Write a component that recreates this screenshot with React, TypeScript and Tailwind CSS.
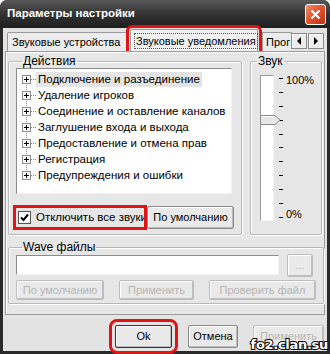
import React from "react";

const actions = [
  "Подключение и разъединение",
  "Удаление игроков",
  "Соединение и оставление каналов",
  "Заглушение входа и выхода",
  "Предоставление и отмена прав",
  "Регистрация",
  "Предупреждения и ошибки",
];

const font = { fontFamily: '"Liberation Sans", Arial, sans-serif' };

function Btn({
  children,
  className = "",
  disabled = false,
}: {
  children: React.ReactNode;
  className?: string;
  disabled?: boolean;
}) {
  return (
    <div
      className={`flex items-center justify-center whitespace-nowrap rounded-[2px] border bg-[#e9e9e9] shadow-[inset_-1px_-1px_0_#bdbdbd,inset_1px_1px_0_#ffffff] text-[11px] ${
        disabled ? "text-[#b5b5b5] border-[#bdbdbd]" : "text-black border-[#8a8a8a]"
      } ${className}`}
    >
      {children}
    </div>
  );
}

function Group({
  title,
  className = "",
  children,
}: {
  title: string;
  className?: string;
  children: React.ReactNode;
}) {
  return (
    <fieldset
      className={`border border-[#b8b8b8] rounded-[2px] shadow-[inset_1px_1px_0_#ffffff,1px_1px_0_#ffffff] ${className}`}
    >
      <legend className="ml-[6px] px-[1px] text-[12px] leading-[12px] text-black whitespace-nowrap">
        {title}
      </legend>
      {children}
    </fieldset>
  );
}

function Slider() {
  const ticks = Array.from({ length: 11 });
  return (
    <div className="flex h-[150px] pl-[9px] pt-[8px]">
      <div className="relative w-[14px] h-[146px] bg-white border border-t-[#9a9a9a] border-l-[#9a9a9a] border-r-[#f4f4f4] border-b-[#f4f4f4]">
        <div className="absolute left-[-1px] top-[39px] w-[21px] h-[10px]">
          <svg width="21" height="10" viewBox="0 0 21 10">
            <path d="M0.5 0.5 H15 L20 5 L15 9.5 H0.5 Z" fill="#e6e6e6" stroke="#8a8a8a" />
            <path d="M1.5 1.5 H14.5" stroke="#ffffff" />
          </svg>
        </div>
      </div>
      <div className="flex flex-col justify-between ml-[5px] h-[140px] mt-[3px]">
        {ticks.map((_, i) => (
          <div key={i} className="w-[4px] h-px bg-black" />
        ))}
      </div>
      <div className="flex flex-col justify-between ml-[3px] h-[146px] -mt-[1px] text-[11px] leading-[12px]">
        <span>100%</span>
        <span>0%</span>
      </div>
    </div>
  );
}

export default function App() {
  return (
    <div
      className="relative w-[330px] h-[354px] bg-[#2a2a2a] flex flex-col overflow-hidden rounded-t-[7px]"
      style={font}
    >
      {/* title bar */}
      <div className="h-[28px] flex items-center justify-between pl-[7px] pr-[4px] bg-gradient-to-b from-[#5a5a5a] via-[#333333] to-[#1f1f1f]">
        <span className="text-white font-bold text-[11.5px]">
          Параметры настройки
        </span>
        <div className="w-[21px] h-[21px] rounded-[3px] border border-white bg-gradient-to-br from-[#f08a6a] via-[#e0502a] to-[#c03010] flex items-center justify-center">
          <svg width="11" height="11" viewBox="0 0 11 11">
            <path d="M1.5 1.5 L9.5 9.5 M9.5 1.5 L1.5 9.5" stroke="#ffffff" strokeWidth="2.2" />
          </svg>
        </div>
      </div>

      {/* body */}
      <div className="flex-1 mx-[3px] mb-[3px] bg-[#e3e3e3] flex flex-col px-[2px] pt-[1px]">
        {/* tabs */}
        <div className="flex items-end h-[22px] pl-[2px] text-[11px] whitespace-nowrap">
          <div className="w-[121px] h-[19px] px-[4px] flex items-center bg-[#ececec] border border-b-0 border-[#9a9a9a] rounded-t-[2px]">
            Звуковые устройства
          </div>
          <div className="w-[128px] h-[22px] ml-[2px] px-[3px] flex items-center bg-[#f0f0f0] border border-b-0 border-[#9a9a9a] rounded-t-[2px] outline-[3px] outline-solid outline-[#e01414] outline-offset-[1px]">
            <span className="border border-dotted border-[#555] px-[1px] leading-[14px]">
              Звуковые уведомления
            </span>
          </div>
          <div className="h-[19px] ml-[4px] pl-[3px] w-[30px] flex items-center bg-[#ececec] border border-b-0 border-r-0 border-[#9a9a9a]">
            Прог
          </div>
          <div className="flex mb-[2px] ml-[-2px]">
            {["M6 1 L2 5 L6 9 Z", "M2 1 L6 5 L2 9 Z"].map((d, i) => (
              <div
                key={i}
                className="w-[16px] h-[16px] ml-[1px] flex items-center justify-center bg-[#ececec] border border-[#8a8a8a] shadow-[inset_1px_1px_0_#fff]"
              >
                <svg width="8" height="10" viewBox="0 0 8 10">
                  <path d={d} fill="#000" />
                </svg>
              </div>
            ))}
          </div>
        </div>

        {/* tab panel */}
        <div className="h-[264px] border border-[#9a9a9a] bg-[#e6e6e6] shadow-[inset_1px_1px_0_#ffffff] px-[2px] pt-[3px] flex flex-col">
          <div className="flex gap-[8px]">
            <Group title="Действия" className="w-[232px] h-[180px] px-[7px] pt-[1px]">
              <div className="h-[126px] w-[216px] bg-white border border-t-[#8c8c8c] border-l-[#8c8c8c] border-r-[#f2f2f2] border-b-[#f2f2f2] pt-[2px] pl-[5px] relative overflow-hidden">
                <div className="absolute left-[9px] top-[10px] h-[97px] border-l border-dotted border-[#8a8a8a]" />
                {actions.map((a, i) => (
                  <div key={a} className="relative h-[16px] flex items-center text-[11.5px] whitespace-nowrap">
                    <div className="shrink-0 w-[9px] h-[9px] border border-[#8a8a8a] bg-white flex items-center justify-center">
                      <svg width="7" height="7" viewBox="0 0 7 7">
                        <path d="M1 3.5 H6 M3.5 1 V6" stroke="#000" />
                      </svg>
                    </div>
                    <div className="shrink-0 w-[5px] border-t border-dotted border-[#8a8a8a]" />
                    <span className={`px-[2px] leading-[15px] ${i === 0 ? "bg-[#e4e4e4]" : ""}`}>
                      {a}
                    </span>
                  </div>
                ))}
              </div>
              <div className="flex mt-[12px] -ml-[2px] h-[23px]">
                <div className="w-[132px] flex items-center gap-[5px] pl-[4px] whitespace-nowrap outline-[3px] outline-solid outline-[#e01414] -outline-offset-[2px] text-[11.5px]">
                  <div className="shrink-0 w-[13px] h-[13px] bg-white border border-[#555] flex items-center justify-center">
                    <svg width="9" height="9" viewBox="0 0 9 9">
                      <path d="M1 4.5 L3.5 7 L8 1.5" stroke="#000" strokeWidth="2" fill="none" />
                    </svg>
                  </div>
                  <span>Отключить все звуки</span>
                </div>
                <Btn className="w-[87px] ml-[1px] text-[11.5px]">По умолчанию</Btn>
              </div>
            </Group>
            <Group title="Звук" className="w-[72px] h-[180px]">
              <Slider />
            </Group>
          </div>

          <Group title="Wave файлы" className="mt-[6px] w-[312px] h-[63px] px-[7px]">
            <div className="flex mt-[2px] gap-[8px]">
              <div className="w-[263px] h-[20px] bg-white border border-t-[#8c8c8c] border-l-[#8c8c8c] border-r-[#f2f2f2] border-b-[#f2f2f2]" />
              <Btn disabled className="w-[26px] h-[23px] -mt-[1px] text-[10px]">...</Btn>
            </div>
            <div className="flex mt-[3px] gap-[15px]">
              <Btn disabled className="w-[88px] h-[20px]">По умолчанию</Btn>
              <Btn disabled className="w-[75px] h-[20px]">Применить</Btn>
              <Btn disabled className="w-[107px] h-[20px]">Проверить файл</Btn>
            </div>
          </Group>
        </div>

        {/* bottom buttons */}
        <div className="flex mt-[10px] pl-[110px] h-[23px]">
          <Btn className="w-[57px] text-[11.5px] outline-[3px] outline-solid outline-[#e01414] outline-offset-[3px] border-[#333]">Ok</Btn>
          <Btn className="w-[50px] ml-[16px] text-[11.5px]">Отмена</Btn>
          <Btn disabled className="w-[71px] ml-[15px] text-[11.5px]">Применить</Btn>
        </div>
      </div>

      <div
        className="absolute right-[2px] bottom-[1px] text-white font-bold text-[13px] leading-[16px] tracking-[-0.3px] [-webkit-text-stroke:2px_#000] [paint-order:stroke_fill]"
        style={{ fontFamily: '"DejaVu Sans", sans-serif' }}
      >
        fo2.clan.su
      </div>
    </div>
  );
}
